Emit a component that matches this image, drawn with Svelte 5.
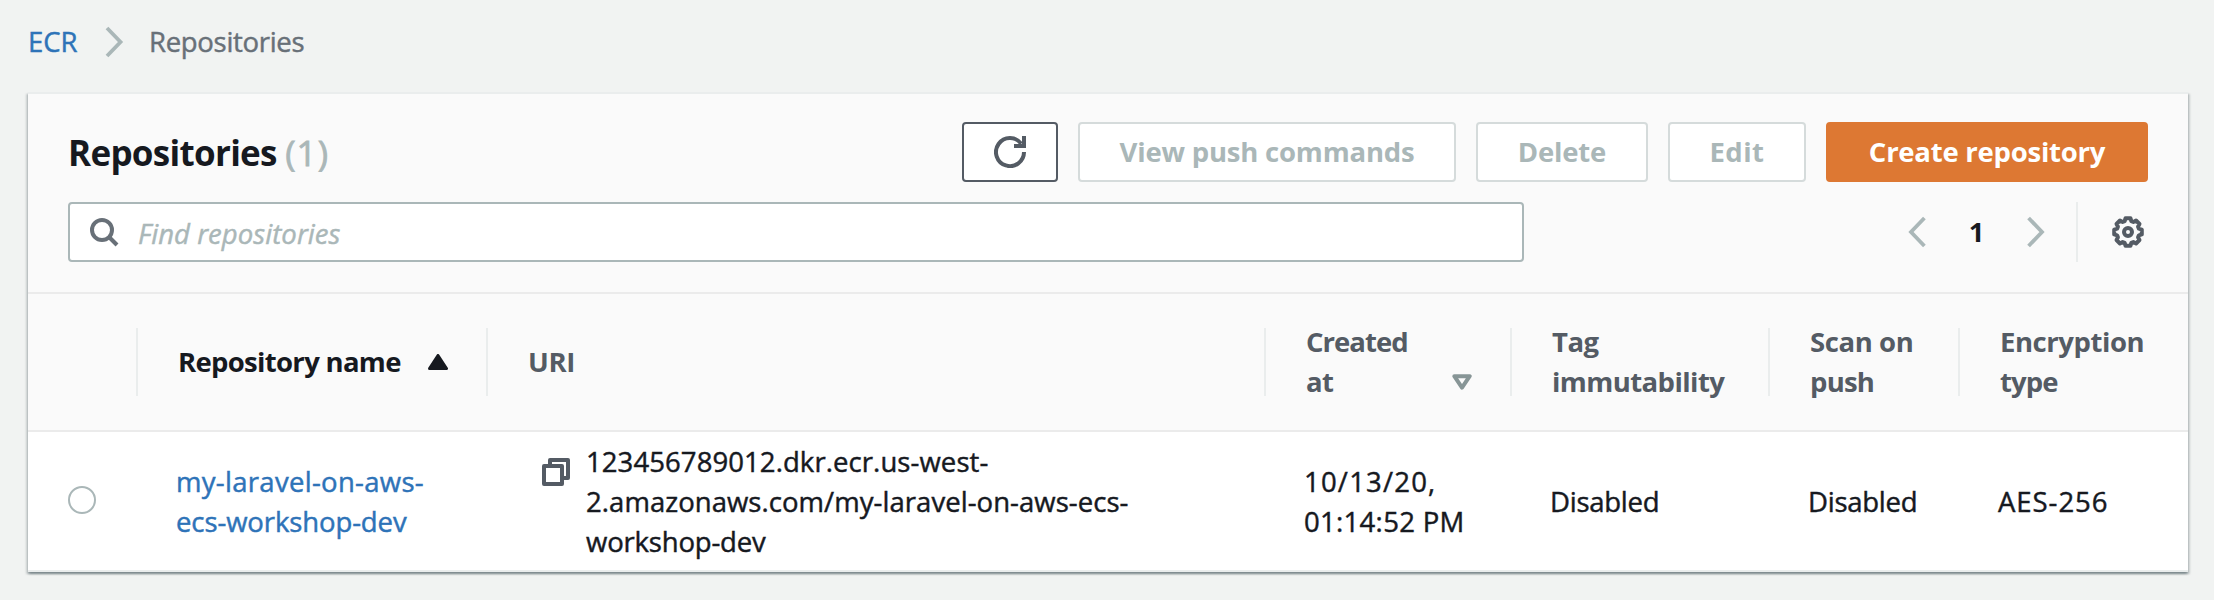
<script>
  const actions = [
    { label: 'View push commands', width: 378, track: -0.2 },
    { label: 'Delete', width: 172, track: -0.18 },
    { label: 'Edit', width: 138, track: 0.5 },
    { label: 'Create repository', width: 322, track: -0.25, primary: true }
  ];

  const columns = [
    { lines: [['Repository name', -0.69]], sort: 'asc' },
    { lines: [['URI', -0.3]] },
    { lines: [['Created', -0.97], ['at', -0.5]], sort: 'none' },
    { lines: [['Tag', -0.5], ['immutability', -0.57]] },
    { lines: [['Scan on', -0.4], ['push', -0.77]] },
    { lines: [['Encryption', -0.45], ['type', -0.9]] }
  ];

  const repo = {
    name: [['my-laravel-on-aws-', 0.3], ['ecs-workshop-dev', -0.11]],
    uri: [
      ['123456789012.dkr.ecr.us-west-', 0.08],
      ['2.amazonaws.com/my-laravel-on-aws-ecs-', 0.05],
      ['workshop-dev', -0.18]
    ],
    created: [['10/13/20,', 1.2], ['01:14:52 PM', 0.3]],
    immutability: [['Disabled', -0.25]],
    scan: [['Disabled', -0.25]],
    encryption: [['AES-256', 0.95]]
  };

  // Gear outline: eight teeth around the centre of a 32px box
  const gear = Array.from({ length: 8 }, (_, i) =>
    [[-10, 14], [10, 14], [17, 11.4], [28, 11.4]].map(([d, r]) => {
      const a = ((i * 45 + d) * Math.PI) / 180;
      return `${(16 + r * Math.cos(a)).toFixed(2)},${(16 + r * Math.sin(a)).toFixed(2)}`;
    })
  ).flat().join(' ');
</script>

{#snippet text(lines)}
  <div class="lines">
    {#each lines as [t, track]}
      <div><span style:letter-spacing="{track}px">{t}</span></div>
    {/each}
  </div>
{/snippet}

<div class="page">
  <nav class="crumbs">
    <a href="#ecr">ECR</a>
    <svg class="sep" width="20" height="32" viewBox="0 0 20 32"><path d="M2 2 L15.5 16 L2 30" fill="none" stroke="#aab7b8" stroke-width="3.8" /></svg>
    <span class="here">Repositories</span>
  </nav>

  <section class="card">
    <header class="top">
      <div class="bar">
        <h1>Repositories <span>(1)</span></h1>
        <div class="buttons">
          <button class="refresh" aria-label="Refresh">
            <svg width="32" height="32" viewBox="0 0 32 32" fill="none" stroke="#545b64" stroke-width="4">
              <path d="M30 16A14 14 0 1 1 27.2 7.7" /><path d="M30 0V10H20" />
            </svg>
          </button>
          {#each actions as a}
            <button class:primary={a.primary} style:width="{a.width}px" style:letter-spacing="{a.track}px">{a.label}</button>
          {/each}
        </div>
      </div>
      <div class="bar second">
        <div class="search">
          <svg width="32" height="32" viewBox="0 0 32 32" fill="none" stroke="#687078" stroke-width="4">
            <circle cx="14" cy="14" r="10" /><path d="M21 21L29 29" />
          </svg>
          <span>Find repositories</span>
        </div>
        <div class="pager">
          <svg width="18" height="32" viewBox="0 0 18 32"><path d="M16.4 2L3 16L16.4 30" fill="none" stroke="#aab7b8" stroke-width="3.8" /></svg>
          <b>1</b>
          <svg width="18" height="32" viewBox="0 0 18 32"><path d="M1.6 2L15 16L1.6 30" fill="none" stroke="#aab7b8" stroke-width="3.8" /></svg>
          <i></i>
          <svg class="gear" width="32" height="32" viewBox="0 0 32 32" fill="none" stroke="#545b64" stroke-width="4" stroke-linejoin="round">
            <polygon points={gear} /><circle cx="16" cy="16" r="4" />
          </svg>
        </div>
      </div>
    </header>

    <div class="grid head">
      <div class="th first"></div>
      {#each columns as c}
        <div class="th" class:sorted={c.sort === 'asc'}>
          {@render text(c.lines)}
          {#if c.sort === 'asc'}
            <svg class="asc" width="20" height="16" viewBox="0 0 20 16"><path d="M10 1.5L18.5 14.5H1.5Z" fill="#16191f" stroke="#16191f" stroke-width="3" stroke-linejoin="round" /></svg>
          {:else if c.sort}
            <svg class="none" width="20" height="16" viewBox="0 0 20 16"><path d="M10 13.6L17.7 2.2H2.3Z" fill="none" stroke="#879596" stroke-width="4" stroke-linejoin="round" /></svg>
          {/if}
        </div>
      {/each}
    </div>

    <div class="grid row">
      <div class="td pick"><span class="radio"></span></div>
      <div class="td link">{@render text(repo.name)}</div>
      <div class="td uri">
        <svg width="28" height="28" viewBox="0 0 28 28" fill="none" stroke="#545b64" stroke-width="4" stroke-linejoin="round">
          <rect x="2" y="8" width="18" height="18" /><path d="M8 7V2H26V20H21" />
        </svg>
        {@render text(repo.uri)}
      </div>
      <div class="td">{@render text(repo.created)}</div>
      <div class="td">{@render text(repo.immutability)}</div>
      <div class="td">{@render text(repo.scan)}</div>
      <div class="td">{@render text(repo.encryption)}</div>
    </div>
  </section>
</div>

<style>
  :global(body) { background: #f1f3f2; }
  .page {
    box-sizing: border-box;
    width: 2214px;
    height: 600px;
    overflow: hidden;
    background: #f1f3f2;
    color: #16191f;
    font: 400 27.5px/40px "Open Sans", "Noto Sans", sans-serif;
    white-space: nowrap;
  }
  .crumbs, .row, .search span, h1 span { -webkit-text-stroke: .45px currentColor; }
  .crumbs { display: flex; align-items: center; height: 84px; padding: 0 0 8px 28px; box-sizing: content-box; }
  .crumbs a, .link { color: #2e73b8; text-decoration: none; }
  .crumbs a { width: 77px; }
  .sep { width: 20px; margin-right: 24px; }
  .here { color: #687078; letter-spacing: -0.3px; }

  .card {
    box-sizing: border-box;
    width: 2160px;
    margin-left: 28px;
    border-top: 2px solid #eaeded;
    background: #fff;
    box-shadow: 0 2px 2px rgba(0, 28, 36, .3), 2px 2px 2px rgba(0, 28, 36, .15), -2px 2px 2px rgba(0, 28, 36, .15);
  }
  .top { padding: 28px 40px 30px; background: #fafafa; border-bottom: 2px solid #ebebeb; }
  .bar { display: flex; justify-content: space-between; align-items: center; height: 60px; }
  .second { margin-top: 20px; }
  h1 { margin: 0; padding-top: 2px; font-size: 35px; line-height: 60px; font-weight: 700; letter-spacing: -0.7px; }
  h1 span { font-weight: 400; color: #aab7b8; letter-spacing: 1.1px; -webkit-text-stroke-width: .8px; }
  .buttons { display: flex; gap: 20px; }
  button {
    box-sizing: border-box;
    height: 60px;
    padding: 0;
    border: 2px solid #d5dbdb;
    border-radius: 4px;
    background: #fff;
    color: #aab7b8;
    font: 700 27.5px/40px "Open Sans", "Noto Sans", sans-serif;
  }
  .refresh { display: flex; align-items: center; justify-content: center; width: 96px; padding: 0; border-color: #545b64; }
  .primary { border-color: #dd7833; background: #dd7833; color: #fff; }
  .search {
    box-sizing: border-box;
    display: flex;
    align-items: center;
    width: 1456px;
    height: 60px;
    padding-left: 18px;
    border: 2px solid #aab7b8;
    border-radius: 4px;
    background: #fff;
  }
  .search span { margin-left: 18px; padding-top: 3px; color: #aab7b8; font-style: italic; letter-spacing: 0.05px; }
  .pager { display: flex; align-items: center; height: 60px; margin-right: 4px; }
  .pager b { width: 101px; text-align: center; }
  .pager i { width: 2px; height: 60px; margin: 0 34px 0 31px; background: #eaeded; }

  .grid { display: grid; grid-template-columns: 110px 350px 778px 246px 258px 190px 228px; align-items: center; }
  .head { height: 136px; background: #fafafa; border-bottom: 2px solid #ebebeb; }
  .th {
    box-sizing: border-box;
    display: flex;
    align-items: center;
    height: 68px;
    padding-left: 40px;
    border-right: 2px solid #eaeded;
    color: #545b64;
    font-weight: 700;
  }
  .th:last-child { border-right: 0; }
  .sorted { color: #16191f; }
  .asc { margin-left: auto; margin-right: 38px; }
  .none { margin-left: auto; margin-right: 38px; align-self: flex-end; margin-bottom: 6px; }
  .row { height: 138px; border-bottom: 2px solid #eaeded; }
  .td { padding: 2px 0 0 38px; }
  .pick { padding: 0 0 2px 40px; display: flex; }
  .radio { box-sizing: border-box; width: 28px; height: 28px; border: 2px solid #aab7b8; border-radius: 50%; background: #fff; }
  .uri { display: flex; align-items: flex-start; padding-left: 54px; }
  .uri svg { margin: 16px 16px 0 0; }
</style>
